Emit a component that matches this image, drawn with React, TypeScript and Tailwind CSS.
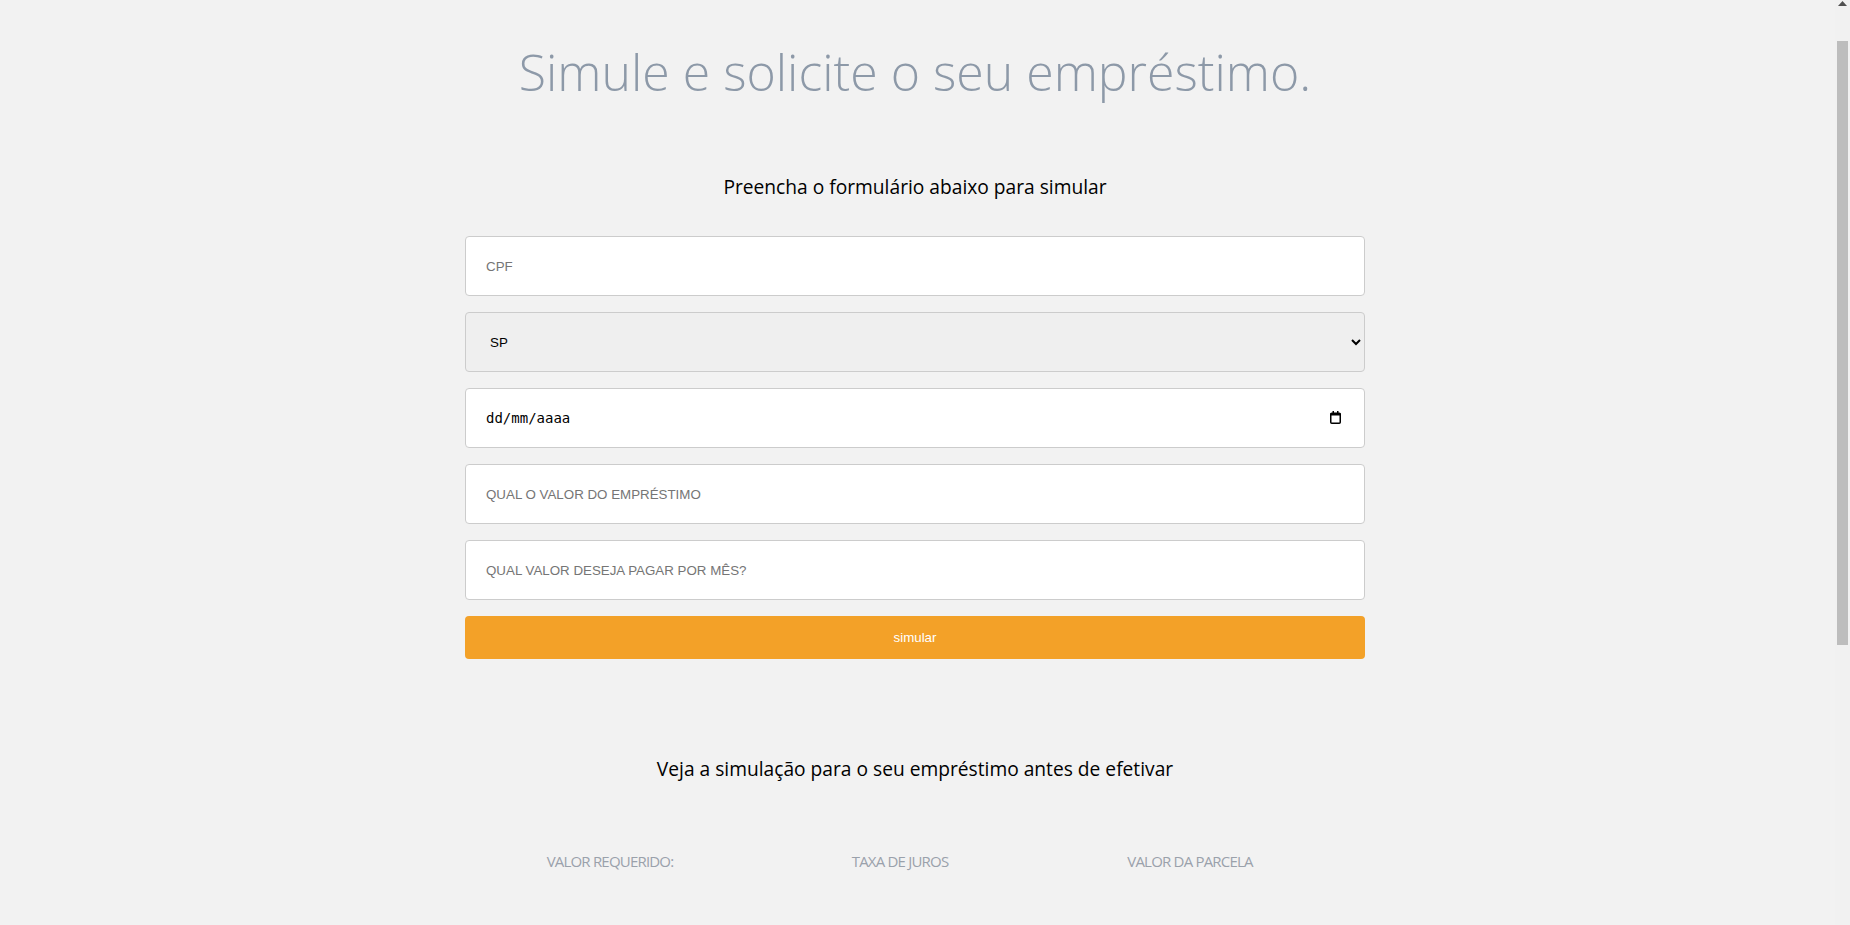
import { useState } from 'react';

const fieldBase =
  'w-full h-[60px] rounded-[4px] border border-[#cccccc] px-5 text-[13.33px] text-black outline-none';

const labelCls = 'text-center text-[15px] leading-[20px] tracking-[-0.8px] text-[#9aa1ab]';

function CalendarIcon() {
  return (
    <svg width="11" height="13" viewBox="0 0 11 13" className="pointer-events-none">
      <rect x="0.75" y="2.25" width="9.5" height="10" rx="1" fill="none" stroke="#000" strokeWidth="1.5" />
      <rect x="0.5" y="2" width="10" height="2.5" fill="#000" />
      <rect x="2.5" y="0" width="1.5" height="3" fill="#000" />
      <rect x="7" y="0" width="1.5" height="3" fill="#000" />
    </svg>
  );
}

// page scrollbar as seen in the screenshot
function Scrollbar() {
  return (
    <aside className="fixed right-0 top-0 flex h-screen w-[15px] flex-col items-center bg-[#f1f1f1]">
      <svg width="9" height="5" viewBox="0 0 9 5" className="mt-[1px]">
        <path d="M4.5 0 L9 5 L0 5 Z" fill="#505050" />
      </svg>
      <div className="mt-[35px] h-[604px] w-[11px] bg-[#bdbdbd]" />
    </aside>
  );
}

export default function App() {
  const [cpf, setCpf] = useState('');
  const [uf, setUf] = useState('SP');
  const [nascimento, setNascimento] = useState('');
  const [valor, setValor] = useState('');
  const [mensal, setMensal] = useState('');

  return (
    <div className="min-h-[1330px] bg-[#f2f2f2] pt-[37px] pr-[20px] pb-[300px] font-['Open_Sans',sans-serif]">
      <h1 className="text-center text-[50px] leading-[70px] font-light text-[#8d99a8]">
        Simule e solicite o seu empréstimo.
      </h1>

      <h2 className="mt-[67px] text-center text-[19.2px] leading-[26px] text-black">
        Preencha o formulário abaixo para simular
      </h2>

      <form
        className="mx-auto mt-[36px] flex w-[900px] flex-col gap-4 font-['Liberation_Sans',Arial,sans-serif]"
        onSubmit={(e) => e.preventDefault()}
      >
        <input
          className={`${fieldBase} bg-white placeholder:text-[#757575]`}
          placeholder="CPF"
          value={cpf}
          onChange={(e) => setCpf(e.target.value)}
        />
        <select
          className={`${fieldBase} bg-[#efefef] pr-2`}
          value={uf}
          onChange={(e) => setUf(e.target.value)}
        >
          <option value="SP">SP</option>
          <option value="RJ">RJ</option>
          <option value="MG">MG</option>
          <option value="ES">ES</option>
        </select>
        <div className="relative">
          <input
            className={`${fieldBase} bg-white font-['DejaVu_Sans_Mono',monospace] text-[14px] placeholder:text-black`}
            placeholder="dd/mm/aaaa"
            value={nascimento}
            onChange={(e) => setNascimento(e.target.value)}
          />
          <span className="absolute right-[24px] top-[23px] flex">
            <CalendarIcon />
          </span>
        </div>
        <input
          className={`${fieldBase} bg-white placeholder:text-[#757575]`}
          placeholder="QUAL O VALOR DO EMPRÉSTIMO"
          value={valor}
          onChange={(e) => setValor(e.target.value)}
        />
        <input
          className={`${fieldBase} bg-white placeholder:text-[#757575]`}
          placeholder="QUAL VALOR DESEJA PAGAR POR MÊS?"
          value={mensal}
          onChange={(e) => setMensal(e.target.value)}
        />
        <button
          type="submit"
          className="h-[43px] w-full rounded-[4px] bg-[#f3a128] text-[13.33px] text-white"
        >
          simular
        </button>
      </form>

      <h2 className="mt-[97px] text-center text-[19.2px] leading-[26px] text-black">
        Veja a simulação para o seu empréstimo antes de efetivar
      </h2>

      <div className="mx-auto mt-[69px] grid w-[900px] grid-cols-[repeat(3,290px)]">
        <div className={labelCls}>VALOR REQUERIDO:</div>
        <div className={labelCls}>TAXA DE JUROS</div>
        <div className={labelCls}>VALOR DA PARCELA</div>
      </div>

      <Scrollbar />
    </div>
  );
}
